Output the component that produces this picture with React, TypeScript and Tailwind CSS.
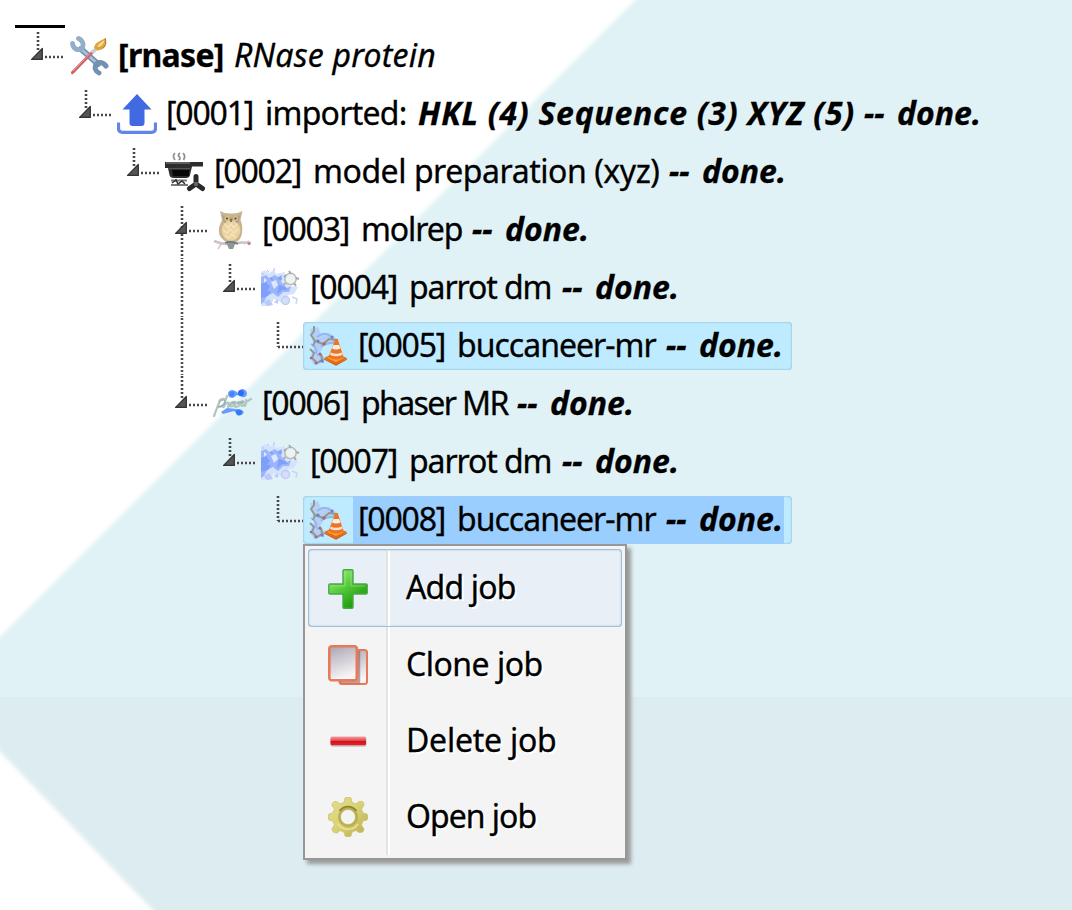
import React from "react";

type Seg = { t: string; c: string };
type Job = {
  icon: React.ReactNode;
  guides: boolean[];
  kind: "last" | "middle" | "leaf" | "lastLong";
  segs: Seg[];
  state?: "marked" | "selected";
};

const BI = "font-bold italic ";

function Backdrop() {
  return (
    <svg className="absolute inset-0 h-full w-full" viewBox="0 0 1072 910">
      <defs>
        <filter id="edge" x="-5%" y="-5%" width="110%" height="110%">
          <feGaussianBlur stdDeviation="2.2" />
        </filter>
        <clipPath id="upper"><rect width="1072" height="697" /></clipPath>
        <clipPath id="lower"><rect y="697" width="1072" height="213" /></clipPath>
      </defs>
      <g clipPath="url(#upper)">
        <path d="M-40 677L675 -40H1150V760H-40Z" fill="#e0f2f6" filter="url(#edge)" />
      </g>
      <g clipPath="url(#lower)">
        <path d="M-40 600H1150V960H201L-40 710Z" fill="#ddecf0" filter="url(#edge)" />
      </g>
    </svg>
  );
}

function Guide({ on }: { on: boolean }) {
  return (
    <svg width="48" height="58" className="shrink-0">
      {on && <path d="M23 1V58" stroke="#505050" strokeWidth="2.6" strokeDasharray="2 2" />}
    </svg>
  );
}

function Connector({ kind }: { kind: Job["kind"] }) {
  const dots = { stroke: "#484848", strokeWidth: 2.6, strokeDasharray: "2 2", fill: "none" };
  if (kind === "leaf")
    return (
      <svg width="48" height="58" className="shrink-0">
        <path d="M23 5V30" {...dots} />
        <path d="M23 30H48" {...dots} />
      </svg>
    );
  return (
    <svg width="48" height="58" className="shrink-0">
      <path d={kind === "middle" ? "M23 5V58" : kind === "lastLong" ? "M23 1V24" : "M23 5V24"} {...dots} />
      <path d="M30 30H48" {...dots} />
      <path d="M27.3 21.5V32.4H16.6Z" fill="#555" stroke="#333" strokeWidth="1.3" strokeLinejoin="round" />
    </svg>
  );
}

function ToolsIcon() {
  return (
    <svg width="40" height="40" viewBox="0 0 40 40">
      <g stroke="#7f9cbd" strokeLinecap="round" fill="none">
        <path d="M12 13L29 28" stroke="#7892b0" strokeWidth="6" />
        <path d="M12 13L29 28" stroke="#a9c2dc" strokeWidth="2.500" />
        <path d="M3.500 7.500C4 13 9 15 12.500 12.500C15.500 9.500 14 4.500 9.500 2.500" strokeWidth="4.800" stroke="#91aecb" />
        <path d="M37 30C34 25.500 29 25.500 27 28.500C25 32 27 36 30 37" strokeWidth="5" stroke="#7391b3" />
      </g>
      <path d="M3.500 36.500L23.500 16" stroke="#cd6265" strokeWidth="3.200" strokeLinecap="round" />
      <path d="M4 35L22 16.500" stroke="#ee9a99" strokeWidth="1" />
      <path d="M21.500 15.500L26 11.500L28.500 14L24.500 18Z" fill="#c7cdd3" />
      <path d="M25 12C26 6 31 5 37 2C37 8 36 14 28.500 14.500Z" fill="#dfa33c" />
      <path d="M28 11C30 7 33 6 35.500 4C34.500 8 33 11 28 11Z" fill="#f8dc95" />
      <path d="M36 2.500C38 7 36 11 33.500 12.500" stroke="#a86a24" fill="none" />
    </svg>
  );
}

function ImportIcon() {
  return (
    <svg width="40" height="40" viewBox="0 0 40 40">
      <path d="M20 0L34.500 15.500H27.500V29Q27.500 32 24.500 32H15.500Q12.500 32 12.500 29V15.500H5.500Z" fill="#4169e1" />
      <path d="M1.500 28.500V34.500Q1.500 38.300 5.300 38.300H34.700Q38.500 38.300 38.500 34.500V28.500" fill="none" stroke="#6485e8" strokeWidth="3.200" />
    </svg>
  );
}

function PotIcon() {
  return (
    <svg width="40" height="40" viewBox="0 0 40 40">
      <g fill="none" stroke="#8e8e8e" strokeWidth="1.700">
        <path d="M10 1Q7 4 10 8M15 1Q12 3 14.500 5Q16 7 13.500 8M18 1Q21 4 18.500 8" />
      </g>
      <path d="M0 10H38V14.500H27L25 23Q24.500 26 21 26H9Q5 26 4.500 23L3 16H0Z" fill="#2d2d2d" />
      <path d="M1 11H25" stroke="#7a7a7a" strokeWidth="1.300" />
      <path d="M4 16.500H25" stroke="#555" />
      <path d="M7 18H24V24H8Z" fill="#080808" />
      <path d="M6 28.500H22M6 33H23" stroke="#7b7b7b" strokeWidth="2.200" />
      <path d="M7 31L11 28L13 32L17 29L20 32" stroke="#333" strokeWidth="1.500" fill="none" />
      <g stroke="#292929" strokeLinecap="round" strokeWidth="5">
        <path d="M31 24.500V30M29.500 33L24.500 36.500M32.500 33L37.500 36.500" />
      </g>
      <circle cx="31" cy="32" r="2.200" fill="#666" />
    </svg>
  );
}

function OwlIcon() {
  return (
    <svg width="40" height="40" viewBox="0 0 40 40">
      <path d="M1 31Q10 35 20 33.500T38 33" stroke="#cdc3c7" strokeWidth="2.500" fill="none" />
      <path d="M8 34L5 39M31 34L36 31" stroke="#d9c6ca" strokeWidth="1.500" />
      <path d="M7 1Q12 4 18 3.500Q24 4 29.500 1L27.500 10Q31 18 28 27Q25 33 18 33Q10 32 6.500 25Q4.500 18 9 10Z" fill="#c8b491" />
      <path d="M9 5Q13 8 18 7Q24 8 27 5L25.500 13H11Z" fill="#a8a09a" />
      <ellipse cx="18" cy="20.500" rx="9.300" ry="10.300" fill="#ead39e" />
      <path d="M12 14L15 18L18 14L21 18L24 14M10 20L14 23L17 19L21 23L25 19M12 25L16 28L19 24L23 28" stroke="#f5e6bd" strokeWidth="1.300" fill="none" />
      <circle cx="14" cy="8.500" r="2.600" fill="#e2bd79" /><circle cx="22.500" cy="8.500" r="2.600" fill="#e2bd79" />
      <circle cx="14" cy="8.500" r="1.100" fill="#4e4945" /><circle cx="22.500" cy="8.500" r="1.100" fill="#4e4945" />
      <path d="M18 9V12" stroke="#665d58" strokeWidth="1.500" />
      <path d="M13 32L23 32L20 39H16Z" fill="#8e9696" />
      <path d="M12 33Q18 30 25 34" stroke="#697583" strokeWidth="1.500" fill="none" />
      <circle cx="36" cy="33.500" r="1.500" fill="#b9858d" />
    </svg>
  );
}

function ParrotIcon() {
  return (
    <svg width="40" height="40" viewBox="0 0 40 40">
      <path d="M0 4Q5 1 8 5L13 2L15 6L24 4L23 12L28 18L37 19L33 26L27 27L22 35L13 31L9 38H0Z" fill="#d5e2fc" />
      <path d="M0 9L5 7L9 11L13 7L17 9L21 7L20 14L26 20L30 18L28 24L22 24L17 29L12 25L6 28L3 34L0 36Z" fill="#9ab5fb" />
      <path d="M0 16L5 14L9 19L6 23L10 23L7 28L0 30ZM8 10L11 9L12 13ZM16 11L20 8L21 12ZM18 17L24 19L27 22L21 22L16 26Z" fill="#7f9ffa" />
      <path d="M10 14L15 12L17 17L13 21ZM3 10L6 12L3 15Z" fill="#dfe8ff" />
      <path d="M3 34L8 31L12 37L6 38ZM13 34L17 31L17 36Z" fill="#b8c9fa" />
      <circle cx="24.500" cy="32.500" r="4" fill="#d3defc" stroke="#bccbf8" strokeWidth="1.300" />
      <path d="M31 29L36 31L35 36" fill="none" stroke="#c8d6fb" strokeWidth="1.500" />
      <circle cx="29.500" cy="11" r="5.700" fill="#edf2f2" stroke="#b6bbb7" strokeWidth="1.500" />
      <path d="M23 9L25 7M28 3L30 6M35 10L38 11M33 15L35 18M24 15L23 17" stroke="#a9aba7" strokeWidth="2" />
      <path d="M6 2L8 4M13 0V3M1 6H3" stroke="#a8bffb" />
    </svg>
  );
}

function BuccaneerIcon() {
  return (
    <svg width="40" height="40" viewBox="0 0 40 40">
      <path d="M1 3L9 1L12 8L20 7L26 11L22 18L16 18L11 26L15 36L5 39L1 32L5 22Z" fill="#b3cff6" />
      <path d="M8 11Q15 5 21 10Q27 13 24 17Q15 17 12 21M2 18Q9 22 7 28M8 29Q15 27 14 37" fill="none" stroke="#94b4f0" strokeWidth="1.800" />
      <path d="M5 0V5L2 9L6 15L4 20M6 15L14 18L20 13L29 14M1 23L5 27L3 32L8 37L13 34L12 28" fill="none" stroke="#94998c" strokeWidth="2" />
      <g fill="#aa6784"><circle cx="15" cy="18" r="1.700" /><circle cx="11" cy="28" r="1.500" /><circle cx="7" cy="37" r="1.500" /><circle cx="2" cy="32" r="1.300" /></g>
      <g fill="#6e7dc6"><circle cx="9" cy="15" r="1.600" /><circle cx="13" cy="35" r="1.500" /><circle cx="23" cy="11" r="1.500" /></g>
      <path d="M15 32L26 27L38 32L27 39.500Z" fill="#e46d14" />
      <path d="M18 32L27 28L35 32L27 36Z" fill="#ff9a38" />
      <path d="M26 14Q27.500 12 29 14L34.500 31Q27 36 19.500 31Z" fill="#ed7423" />
      <path d="M24.500 19L30 19L31.500 22.500Q27 24.500 23 22.500Z" fill="#fff0e4" />
      <path d="M21.800 26.500Q27 29 32.700 26.500L33.500 28.700Q27 32 21 28.700Z" fill="#ffe3cc" />
      <path d="M15 33L27 39L38 33" fill="none" stroke="#cf6117" strokeWidth="1.200" />
    </svg>
  );
}

function PhaserIcon() {
  return (
    <svg width="40" height="40" viewBox="0 0 40 40">
      <g fill="#699bfd">
        <path d="M15 10Q15 6 20 6Q23 7 25 9Q26 5 30 5Q34 6 34 10Q33 14 29 13L24 11L20 14Q15 14 15 10Z" />
        <path d="M8 28L14 24L23 25Q29 25 31 28Q29 32 25 31L21 27L10 30Z" />
      </g>
      <circle cx="28" cy="9" r="3" fill="#2c6bfa" /><circle cx="19" cy="10" r="2.500" fill="#4484fc" /><circle cx="26" cy="28.500" r="3" fill="#347af9" />
      <path d="M1 32L7 16Q13 13 12 18Q10 23 5 23M14 12L10 24Q14 17 16 19L15 23M22 18Q17 17 17 22Q20 24 22 18L22 23M27 18Q22 18 25 20Q28 22 23 23M28 20Q32 18 29 17Q26 20 29 22L33 20M33 16L32 22M33 18L38 15" fill="none" stroke="#b0c6c4" strokeWidth="2.200" strokeLinecap="round" />
      <path d="M6 18Q12 14 12 18T5 23M17 21L22 18M25 19L31 18" stroke="#8fa8a5" fill="none" />
    </svg>
  );
}

const NUM = "tracking-[-1.2px] w-[99px]";
const DASH = BI + "w-[33px]";
const DONE = BI + "w-[86px]";
const PARROT = "w-[153px] tracking-[-1.1px]";
const BUCC = "w-[209px] tracking-[-1px]";
const end: Seg[] = [{ t: "--", c: DASH }, { t: "done.", c: DONE }];

const jobs: Job[] = [
  { icon: <ToolsIcon />, guides: [], kind: "last", segs: [
    { t: "[rnase]", c: "font-bold w-[116px] tracking-[-0.7px]" },
    { t: "RNase protein", c: "italic w-[210px] tracking-[0.2px]" }] },
  { icon: <ImportIcon />, guides: [false], kind: "last", segs: [
    { t: "[0001]", c: NUM },
    { t: "imported:", c: "w-[153px] tracking-[-0.75px]" },
    { t: "HKL (4) Sequence (3) XYZ (5)", c: BI + "w-[446px] tracking-[0.72px]" }, ...end] },
  { icon: <PotIcon />, guides: [false, false], kind: "last", segs: [
    { t: "[0002]", c: NUM },
    { t: "model preparation (xyz)", c: "w-[356px] tracking-[-0.45px]" }, ...end] },
  { icon: <OwlIcon />, guides: [false, false, false], kind: "middle", segs: [
    { t: "[0003]", c: NUM }, { t: "molrep", c: "w-[111px] tracking-[-1.1px]" }, ...end] },
  { icon: <ParrotIcon />, guides: [false, false, false, true], kind: "last", segs: [
    { t: "[0004]", c: NUM }, { t: "parrot dm", c: PARROT }, ...end] },
  { icon: <BuccaneerIcon />, guides: [false, false, false, true, false], kind: "leaf", state: "marked", segs: [
    { t: "[0005]", c: NUM }, { t: "buccaneer-mr", c: BUCC }, ...end] },
  { icon: <PhaserIcon />, guides: [false, false, false], kind: "lastLong", segs: [
    { t: "[0006]", c: NUM }, { t: "phaser MR", c: "w-[156px] tracking-[-1.6px]" }, ...end] },
  { icon: <ParrotIcon />, guides: [false, false, false, false], kind: "last", segs: [
    { t: "[0007]", c: NUM }, { t: "parrot dm", c: PARROT }, ...end] },
  { icon: <BuccaneerIcon />, guides: [false, false, false, false, false], kind: "leaf", state: "selected", segs: [
    { t: "[0008]", c: NUM }, { t: "buccaneer-mr", c: BUCC }, ...end] },
];

function JobRow({ job }: { job: Job }) {
  return (
    <div className="flex h-[58px] items-center">
      {job.guides.map((g, i) => <Guide key={i} on={g} />)}
      <Connector kind={job.kind} />
      <div className={"flex h-12 shrink-0 items-center rounded-[4px] pl-[6px] " +
        (job.state ? "w-[489px] bg-[#beebff] shadow-[inset_0_0_2px_#7899a8]" : "")}>
        <span className="w-11 shrink-0 blur-[0.5px]">{job.icon}</span>
        <div className={"flex h-12 items-center whitespace-nowrap pl-[5px] " +
          (job.state === "selected" ? "w-[431px] bg-[#99ceff]" : "")}>
          {job.segs.map((s, i) => <span key={i} className={"-mt-[3px] shrink-0 " + s.c}>{s.t}</span>)}
        </div>
      </div>
    </div>
  );
}

function PlusIcon() {
  return (
    <svg width="40" height="40" viewBox="0 0 40 40">
      <defs><linearGradient id="plus" x1="0" y1="0" x2="0.700" y2="1"><stop offset="0" stopColor="#a5f58b" /><stop offset=".5" stopColor="#55ca3c" /><stop offset="1" stopColor="#159407" /></linearGradient></defs>
      <path d="M16 .8H24Q25 .8 25 2V15H38Q39.200 15 39.200 16V24Q39.200 25 38 25H25V38Q25 39.200 24 39.200H16Q15 39.200 15 38V25H2Q.8 25 .8 24V16Q.8 15 2 15H15V2Q15 .8 16 .8Z" fill="url(#plus)" stroke="#49a944" strokeWidth="1.400" />
      <path d="M17 2.500V17H2.500M23 2.500V17H37" fill="none" stroke="#c2f8ae" strokeOpacity=".4" />
    </svg>
  );
}

function CloneIcon() {
  return (
    <svg width="40" height="40" viewBox="0 0 40 40">
      <defs><linearGradient id="sheet" x1="0" y1="0" x2=".3" y2="1"><stop offset="0" stopColor="#aaa4b2" /><stop offset="1" stopColor="#f8f5f8" /></linearGradient></defs>
      <rect x="11.500" y="5" width="27.500" height="34" rx="2.500" fill="url(#sheet)" stroke="#e57a58" strokeWidth="2" />
      <path d="M30.500 6V36.500H12" fill="none" stroke="#8b4a43" strokeOpacity=".5" strokeWidth="3.500" />
      <rect x="1.300" y="1.300" width="27.500" height="34" rx="2.500" fill="url(#sheet)" stroke="#e67b58" strokeWidth="2.600" />
      <path d="M3 33.500H27" stroke="#fff" strokeOpacity=".7" />
    </svg>
  );
}

function DeleteIcon() {
  return (
    <svg width="40" height="40" viewBox="0 0 40 40">
      <defs><linearGradient id="minus" x1="0" y1="0" x2="0" y2="1"><stop offset="0" stopColor="#efa2a7" /><stop offset=".45" stopColor="#e94950" /><stop offset=".55" stopColor="#d80f18" /><stop offset="1" stopColor="#d9252d" /></linearGradient></defs>
      <rect x="2.500" y="16.300" width="36" height="9.500" rx="2" fill="#bca8aa" fillOpacity=".65" />
      <rect x="2.500" y="15.500" width="35.500" height="8.800" rx="1.500" fill="url(#minus)" />
    </svg>
  );
}

function GearIcon() {
  return (
    <svg width="40" height="40" viewBox="0 0 40 40">
      <defs><linearGradient id="gear" x1="0" y1="0" x2="1" y2="1"><stop offset="0" stopColor="#e6df8a" /><stop offset=".5" stopColor="#d9d175" /><stop offset="1" stopColor="#b5ab50" /></linearGradient></defs>
      <path fillRule="evenodd" d="M17 1Q20 -1 23 1L24 5.500L28 7L31 4.500Q36 3.500 36 8L33.500 12L35 16L39 17Q41 20 39 23L35 24L33.500 28L36 32Q36 36 31 35.500L28 33.500L24 35L23 39Q20 41 17 39L16 35L12 33.500L9 36Q4 36 4 31.500L6.500 28L5 24L1 23Q-1 20 1 17L5 16L6.500 12L4 8.500Q4 4 8.500 4.500L12 7L16 5.500ZM20 12.500A7.500 7.500 0 1 0 20 27.500A7.500 7.500 0 1 0 20 12.500Z" fill="url(#gear)" stroke="#cbc26c" strokeWidth=".8" />
      <circle cx="20" cy="20" r="8.800" fill="none" stroke="#b7ad53" strokeWidth="2.300" />
      <path d="M11.500 14A10.500 10.500 0 0 1 28.500 14" fill="none" stroke="#8d8438" strokeWidth="1.800" />
      <path d="M10 27A12 12 0 0 0 30 27" fill="none" stroke="#ebe38f" strokeWidth="1.500" />
    </svg>
  );
}

const items = [
  { icon: <PlusIcon />, label: "Add job", c: "tracking-[-0.85px]", on: true },
  { icon: <CloneIcon />, label: "Clone job", c: "tracking-[-0.5px]" },
  { icon: <DeleteIcon />, label: "Delete job", c: "tracking-[-0.25px]" },
  { icon: <GearIcon />, label: "Open job", c: "tracking-[-1px]" },
];

function ContextMenu() {
  return (
    <div className="absolute left-[303px] top-[544px] h-[316px] w-[324px] border-2 border-[#979797] bg-[#f4f4f4] px-[3px] pt-[3px] shadow-[4px_4px_4px_#999]">
      {items.map((it) => (
        <div key={it.label} className={"flex items-center " + (it.on
          ? "h-[78px] rounded-[4px] bg-[#e8eff7] shadow-[inset_0_0_0_1px_#9dc1da,inset_0_0_2px_1px_#a5c9e2]"
          : "h-[76px]")}>
          <span className={"flex w-[78px] justify-center pl-0.5 blur-[0.4px] " + (it.on ? "pt-0.5" : "")}>{it.icon}</span>
          <span className={"w-1 border-l-2 border-[#e2e3e3] bg-white " + (it.on ? "mt-px h-[75px]" : "h-[76px]")} />
          <span className={"-mt-[3px] pl-4 [text-shadow:2px_2px_0_#fff] " + it.c}>{it.label}</span>
        </div>
      ))}
    </div>
  );
}

export default function App() {
  return (
    <main className="relative h-[910px] w-[1072px] overflow-hidden bg-white font-['Noto_Sans',sans-serif] text-[32px] leading-[48px] text-black [-webkit-text-stroke:0.3px_#000]">
      <Backdrop />
      <div className="relative pl-[15px] pt-[25px]">
        <div className="-mb-px h-[3px] w-[50px] bg-black" />
        {jobs.map((job, i) => <JobRow key={i} job={job} />)}
      </div>
      <ContextMenu />
    </main>
  );
}
